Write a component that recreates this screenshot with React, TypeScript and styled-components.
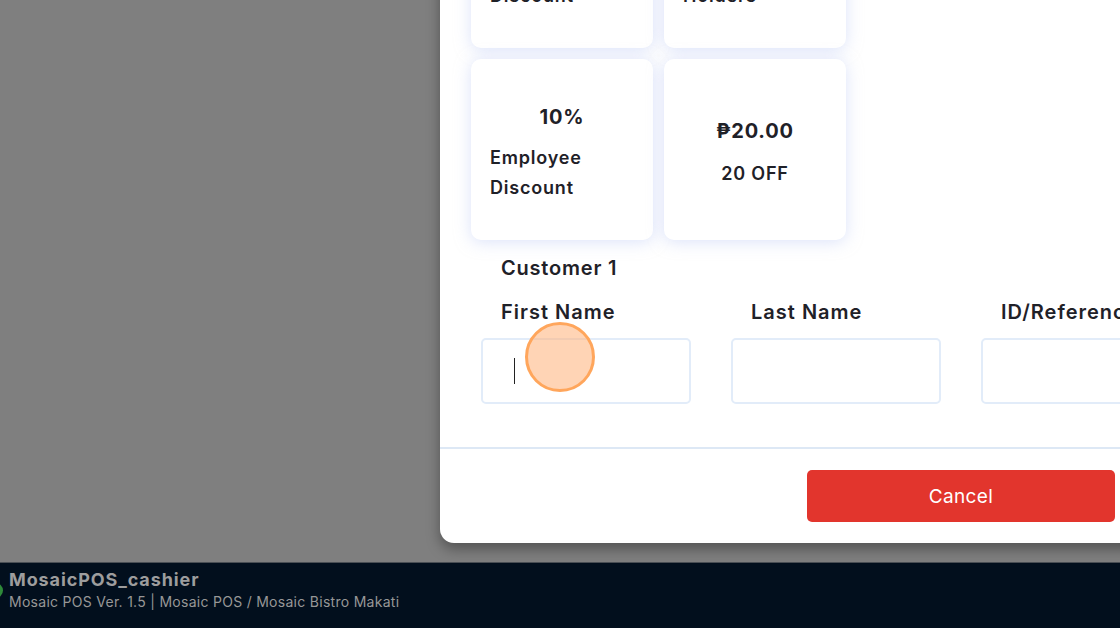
import styled, { createGlobalStyle } from 'styled-components';

const GlobalStyle = createGlobalStyle`
  html, body {
    margin: 0;
    padding: 0;
  }
  body {
    font-family: "Inter", "Noto Sans", sans-serif;
  }
`;

const Screen = styled.div`
  position: relative;
  width: 1120px;
  height: 628px;
  overflow: hidden;
  display: flex;
  flex-direction: column;
  background: #7f7f7f;
`;

const Backdrop = styled.div`
  flex: 1;
`;

const StatusBar = styled.footer`
  height: 66px;
  border-top: 1px solid #4a4f55;
  background: #020f1d;
  display: flex;
  align-items: flex-start;
  gap: 6px;
  padding: 6px 0 0 0;
  box-sizing: border-box;
`;

const StatusDot = styled.span`
  width: 15px;
  height: 15px;
  margin: 14px 0 0 -12px;
  border-radius: 50%;
  background: #2f8a3a;
  flex-shrink: 0;
`;

const StatusText = styled.div`
  display: flex;
  flex-direction: column;
  gap: 1px;
`;

const UserName = styled.div`
  font-size: 18px;
  font-weight: 700;
  letter-spacing: 0.05em;
  color: #9d9d9d;
  line-height: 22px;
`;

const VersionLine = styled.div`
  font-size: 14px;
  letter-spacing: 0.02em;
  color: #979797;
  line-height: 19px;
`;

const Modal = styled.div`
  position: absolute;
  left: 440px;
  bottom: 85px;
  width: 720px;
  background: #ffffff;
  border-radius: 14px;
  box-shadow: 0 6px 14px rgba(0, 0, 0, 0.35);
  display: flex;
  flex-direction: column;
`;

const ModalBody = styled.div`
  padding: 0 0 43px 31px;
  display: flex;
  flex-direction: column;
`;

const CardGrid = styled.div`
  display: grid;
  grid-template-columns: repeat(2, 182px);
  grid-auto-rows: 181px;
  gap: 11px;
`;

const Card = styled.div<{ $align?: 'left' | 'center' }>`
  background: #ffffff;
  border-radius: 10px;
  box-shadow: 0 2px 16px rgba(185, 200, 245, 0.5);
  display: flex;
  flex-direction: column;
  justify-content: center;
  align-items: ${p => (p.$align === 'left' ? 'stretch' : 'center')};
  padding: 7px 19px 0;
  box-sizing: border-box;
  gap: ${p => (p.$align === 'left' ? '12px' : '14px')};
  color: #1f2128;
  letter-spacing: 0.05em;
`;

const CardValue = styled.div`
  font-size: 20px;
  font-weight: 700;
  line-height: 28px;
  text-align: center;
`;

const CardLabel = styled.div<{ $center?: boolean }>`
  font-size: 18px;
  font-weight: 600;
  line-height: 30px;
  text-align: ${p => (p.$center ? 'center' : 'left')};
`;

const CustomerTitle = styled.div`
  margin: 14px 0 0 30px;
  font-size: 20px;
  font-weight: 600;
  letter-spacing: 0.04em;
  line-height: 28px;
  color: #1f2128;
`;

const FieldRow = styled.div`
  display: flex;
  gap: 40px;
  margin: 16px 0 0 10px;
`;

const Field = styled.label`
  display: flex;
  flex-direction: column;
  gap: 12px;
  width: 210px;
  flex-shrink: 0;
`;

const FieldLabel = styled.span`
  padding-left: 20px;
  font-size: 20px;
  font-weight: 600;
  letter-spacing: 0.05em;
  line-height: 28px;
  color: #1f2128;
  white-space: nowrap;
`;

const InputBox = styled.div`
  position: relative;
  height: 66px;
  box-sizing: border-box;
  border: 2px solid #e2ecf9;
  border-radius: 5px;
  background: #ffffff;
`;

const Caret = styled.span`
  position: absolute;
  left: 31px;
  top: 18px;
  width: 1px;
  height: 26px;
  background: #222;
`;

const ClickMark = styled.span`
  position: absolute;
  left: 42px;
  top: -18px;
  width: 64px;
  height: 64px;
  border-radius: 50%;
  background: rgba(255, 176, 120, 0.55);
  border: 3px solid #ffa65c;
`;

const ModalFooter = styled.div`
  border-top: 2px solid #dde8f5;
  height: 96px;
  box-sizing: border-box;
  display: flex;
  align-items: center;
  padding-left: 367px;
`;

const CancelButton = styled.button`
  width: 308px;
  height: 52px;
  border: none;
  border-radius: 5px;
  background: #e2352d;
  color: #ffffff;
  font-family: inherit;
  font-size: 19px;
  letter-spacing: 0.02em;
  cursor: pointer;
`;

const discounts = [
  { kind: 'label', value: '20%', label: ['Senior Citizen', 'Discount'] },
  { kind: 'label', value: '20%', label: ['PWD Card', 'Holders'] },
  { kind: 'label', value: '10%', label: ['Employee', 'Discount'] },
  { kind: 'amount', value: '₱20.00', label: ['20 OFF'] },
];

export default function App() {
  return (
    <>
      <GlobalStyle />
      <Screen>
        <Backdrop />
        <StatusBar>
          <StatusDot />
          <StatusText>
            <UserName>MosaicPOS_cashier</UserName>
            <VersionLine>Mosaic POS Ver. 1.5 | Mosaic POS / Mosaic Bistro Makati</VersionLine>
          </StatusText>
        </StatusBar>

        <Modal>
          <ModalBody>
            <CardGrid>
              {discounts.map((d, i) =>
                d.kind === 'label' ? (
                  <Card key={i} $align="left">
                    <CardValue>{d.value}</CardValue>
                    <div>
                      {d.label.map(l => (
                        <CardLabel key={l}>{l}</CardLabel>
                      ))}
                    </div>
                  </Card>
                ) : (
                  <Card key={i}>
                    <CardValue>{d.value}</CardValue>
                    <CardLabel $center>{d.label[0]}</CardLabel>
                  </Card>
                )
              )}
            </CardGrid>

            <CustomerTitle>Customer 1</CustomerTitle>
            <FieldRow>
              <Field>
                <FieldLabel>First Name</FieldLabel>
                <InputBox>
                  <Caret />
                  <ClickMark />
                </InputBox>
              </Field>
              <Field>
                <FieldLabel>Last Name</FieldLabel>
                <InputBox />
              </Field>
              <Field>
                <FieldLabel>ID/Reference No.</FieldLabel>
                <InputBox />
              </Field>
            </FieldRow>
          </ModalBody>
          <ModalFooter>
            <CancelButton>Cancel</CancelButton>
          </ModalFooter>
        </Modal>
      </Screen>
    </>
  );
}
